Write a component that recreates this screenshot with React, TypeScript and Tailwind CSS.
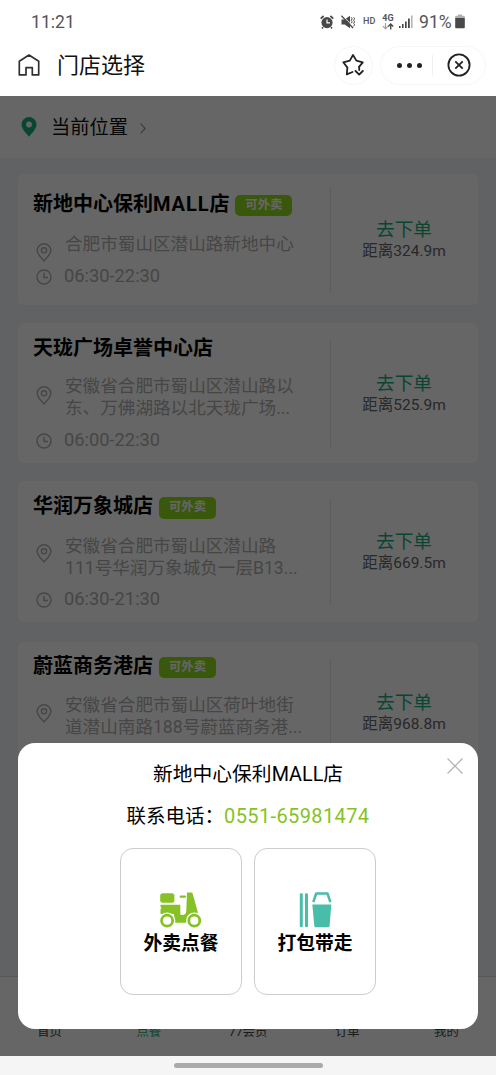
import React from "react";

type Store = {
  name: string;
  nameLatin?: string;
  nameEnd?: string;
  delivery: boolean;
  address: string[];
  hours: string;
  distance: string;
  cardClass: string;
  topClass: string;
  badgeClass: string;
  addressClass: string;
  pinClass: string;
  hoursClass: string;
};

const stores: Store[] = [
  {
    name: "新地中心保利",
    nameLatin: "MALL",
    nameEnd: "店",
    delivery: true,
    address: ["合肥市蜀山区潜山路新地中心"],
    hours: "06:30-22:30",
    distance: "距离324.9m",
    cardClass: "h-[131px]",
    topClass: "pt-[15px]",
    badgeClass: "h-[21px] mt-[3px]",
    addressClass: "mt-[14px] h-[22px]",
    pinClass: "mt-[10px]",
    hoursClass: "mt-[10px]",
  },
  {
    name: "天珑广场卓誉中心店",
    delivery: false,
    address: ["安徽省合肥市蜀山区潜山路以", "东、万佛湖路以北天珑广场..."],
    hours: "06:00-22:30",
    distance: "距离525.9m",
    cardClass: "h-[140px]",
    topClass: "pt-[10px]",
    badgeClass: "h-[21px] mt-[3px]",
    addressClass: "mt-[12px] h-[44px]",
    pinClass: "mt-[11px]",
    hoursClass: "mt-[10px]",
  },
  {
    name: "华润万象城店",
    delivery: true,
    address: ["安徽省合肥市蜀山区潜山路", "111号华润万象城负一层B13..."],
    hours: "06:30-21:30",
    distance: "距离669.5m",
    cardClass: "h-[141px]",
    topClass: "pt-[10px]",
    badgeClass: "h-[22px] mt-[4px]",
    addressClass: "mt-[14px] h-[44px]",
    pinClass: "mt-[9px]",
    hoursClass: "mt-[9px]",
  },
  {
    name: "蔚蓝商务港店",
    delivery: true,
    address: ["安徽省合肥市蜀山区荷叶地街", "道潜山南路188号蔚蓝商务港..."],
    hours: "06:30-21:30",
    distance: "距离968.8m",
    cardClass: "mt-[2px] h-[141px]",
    topClass: "pt-[9px]",
    badgeClass: "h-[21px] mt-[3px]",
    addressClass: "mt-[13px] h-[44px]",
    pinClass: "mt-[10px]",
    hoursClass: "mt-[9px]",
  },
];

const tabs = ["首页", "点餐", "77会员", "订单", "我的"];

function AlarmIcon() {
  return (
    <svg viewBox="0 0 14 14" className="h-[14px] w-[14px]" fill="none">
      <circle cx="7" cy="7.6" r="5.6" fill="#484848" />
      <path d="M.7 3.6 3.6 1M13.3 3.6 10.4 1M3 12.2l-1 1.3M11 12.2l1 1.3" stroke="#484848" strokeWidth="1.7" />
      <path d="M7 4.4v3.5h3" stroke="#fff" strokeWidth="1.2" />
    </svg>
  );
}

function MuteIcon() {
  return (
    <svg viewBox="0 0 14 14" className="h-[14px] w-[14px]" fill="none">
      <path d="M.5 4.6h3.2L9 .8v12.4L3.7 9.6H.5z" fill="#484848" />
      <path d="M1.200.2 12.600 12.200" stroke="#fff" strokeWidth="1" />
      <path d="M.4.8 12 13" stroke="#484848" strokeWidth="1.300" />
      <path d="m10.200 2.300 1 1.500-1 1.500 1 1.500-1 1.500M12.600 2.300l1 1.500-1 1.500 1 1.500-1 1.500 1 1.500-1 1.500" stroke="#484848" strokeWidth="1" />
    </svg>
  );
}

function DataIcon() {
  return (
    <svg viewBox="0 0 12 7" className="h-[7px] w-[12px]" fill="none">
      <path d="M3.5 0v5.5M1 3.2l2.5 2.6L6 3.2" stroke="#a0a0a0" strokeWidth="1.2" />
      <path d="M8.7 6.6V1M6.2 3.6 8.7 1l2.5 2.6" stroke="#484848" strokeWidth="1.4" />
    </svg>
  );
}

function SignalIcon() {
  return (
    <svg viewBox="0 0 14 14" className="h-[14px] w-[14px]">
      <path d="M0 11h1.6v2H0zM3 9h1.6v4H3zM6 6.5h1.7V13H6zM9 3.5h1.8V13H9z" fill="#484848" />
      <path d="M12 .5h1.6V13H12z" fill="#b5b5b5" />
    </svg>
  );
}

function BatteryIcon() {
  return (
    <svg viewBox="0 0 10 15" className="h-[15px] w-[10px]">
      <path d="M3 .4h4v1.4h1.8c.6 0 1 .4 1 1V4H.2V2.8c0-.6.4-1 1-1H3z" fill="#b0b0b0" />
      <path d="M.2 4h9.6v9.3c0 .6-.4 1-1 1H1.2c-.6 0-1-.4-1-1z" fill="#484848" />
    </svg>
  );
}

function HomeIcon() {
  return (
    <svg viewBox="0 0 22 24" className="h-[24px] w-[22px]" fill="none" stroke="#303030" strokeWidth="1.7">
      <path d="M1.3 8.2 11 2l9.7 6.200V21.900h-6.400v-7.200H8v7.200H1.300z" strokeLinejoin="round" />
    </svg>
  );
}

function StarIcon() {
  return (
    <svg viewBox="0 0 22 24" className="h-[24px] w-[22px]" fill="none" stroke="#222" strokeWidth="1.8">
      <path d="m10.500 19-5.700 2.300.6-6.700L1.300 9.300l6.500-1.700L11 2l3.400 5.600 6.400 1.700-3.600 4.300" strokeLinejoin="round" strokeLinecap="round" />
      <path d="m13.500 18 3.700 3.600 3.600-3.600M17.200 13.600v3.400" strokeLinecap="round" strokeLinejoin="round" />
    </svg>
  );
}

function CloseCircleIcon() {
  return (
    <svg viewBox="0 0 24 24" className="h-[24px] w-[24px]" fill="none" stroke="#222" strokeWidth="1.8">
      <circle cx="12" cy="12" r="10.6" />
      <path d="m8.300 8.300 7.400 7.400M15.700 8.300l-7.400 7.400" />
    </svg>
  );
}

function PinIcon() {
  return (
    <svg viewBox="0 0 16 19" className="h-[19px] w-[16px]" fill="none" stroke="#b0b0b0" strokeWidth="1.4">
      <path d="M8 18C5 14.600 1.200 11 1.200 7.400a6.800 6.600 0 0 1 13.600 0C14.800 11 11 14.600 8 18z" />
      <circle cx="8" cy="7.3" r="2.6" />
    </svg>
  );
}

function ClockIcon() {
  return (
    <svg viewBox="0 0 16 16" className="h-[16px] w-[16px]" fill="none" stroke="#b0b0b0" strokeWidth="1.4">
      <circle cx="8" cy="8" r="7" />
      <path d="M8 3.700v4.800h4" />
    </svg>
  );
}

function ScooterIcon() {
  return (
    <svg viewBox="0 0 42 36" className="h-[36px] w-[42px]" fill="#86c225">
      <rect x=".2" y="1.3" width="14.2" height="9.5" rx="2.5" />
      <rect x="19.600" y="3.400" width="6.400" height="2.300" rx="1" />
      <path d="M.5 12.800h19.800v8.700c0 1 .6 1.600 1.700 1.600 2.700 0 4.300-1.700 4.300-4.600L27 .6h4.200c.9 0 1.300.5 1.600 1.400l5 18.300V24H27v6.700H14V22H.5v-5.200l1.300-.6L.5 15z" />
      <circle cx="7.100" cy="28.700" r="8.300" fill="#fff" />
      <circle cx="34.300" cy="28.700" r="8.300" fill="#fff" />
      <circle cx="7.100" cy="28.700" r="5.500" fill="#fff" stroke="#86c225" strokeWidth="2.800" />
      <circle cx="34.300" cy="28.700" r="5.500" fill="#fff" stroke="#86c225" strokeWidth="2.800" />
    </svg>
  );
}

function TakeawayIcon() {
  return (
    <svg viewBox="0 0 33 36" className="h-[36px] w-[33px]" fill="#48bdaa">
      <rect x=".8" y="1.3" width="3" height="34" rx="1.3" />
      <rect x="6" y="1.3" width="3" height="34" rx="1.3" />
      <path d="M13.300 12.500h19l-1.700 21.200c-.1 1-.7 1.600-1.700 1.600H17c-1 0-1.600-.6-1.700-1.600z" />
      <path d="m14.300 10.200 2.900-8.700h11.300l2.900 8.700" fill="none" stroke="#48bdaa" strokeWidth="2.500" strokeLinejoin="round" />
    </svg>
  );
}

function Header() {
  return (
    <header className="h-[96px] bg-white">
      <div className="flex h-[44px] items-center pr-[31px] pl-[31px] text-[#555]">
        <span className="text-[17.6px]">11:21</span>
        <div className="ml-auto flex items-center">
          <AlarmIcon />
          <span className="ml-[7px] flex"><MuteIcon /></span>
          <span className="ml-[8px] w-[12px] text-[9px] leading-none font-medium">HD</span>
          <div className="ml-[7px] flex w-[12px] flex-col items-center text-[9px] leading-[9px] font-bold">
            4G
            <DataIcon />
          </div>
          <span className="ml-[5px] flex"><SignalIcon /></span>
          <span className="ml-[6px] w-[33px] text-[17.6px] whitespace-nowrap">91%</span>
          <span className="ml-[3px] flex"><BatteryIcon /></span>
        </div>
      </div>
      <div className="flex h-[42px] items-center pr-[10px] pl-[18px]">
        <HomeIcon />
        <h1 className="mt-[1px] ml-[17px] text-[22px] leading-[42px] text-[#111]">门店选择</h1>
        <div className="ml-auto flex h-[39px] w-[39px] items-center justify-center rounded-full border border-[#f6f6f6] pr-[2px]">
          <StarIcon />
        </div>
        <div className="ml-[7px] flex h-[39px] w-[106px] items-center rounded-full border border-[#f6f6f6]">
          <div className="ml-[16px] flex gap-[5px]">
            <i className="h-[5px] w-[5px] rounded-full bg-[#222]" />
            <i className="h-[5px] w-[5px] rounded-full bg-[#222]" />
            <i className="h-[5px] w-[5px] rounded-full bg-[#222]" />
          </div>
          <div className="ml-[10px] h-[21px] w-px bg-[#f0f0f0]" />
          <div className="ml-[14px]"><CloseCircleIcon /></div>
        </div>
      </div>
    </header>
  );
}

function StoreCard({ store }: { store: Store }) {
  return (
    <article className={`flex shrink-0 rounded-md bg-white pl-[16px] ${store.cardClass}`}>
      <div className={`w-[296px] shrink-0 ${store.topClass}`}>
        <div className="-ml-[1px] flex h-[30px] items-center">
          <h2 className="text-[20px] font-bold whitespace-nowrap text-black">
            {store.name}
            {store.nameLatin && <span className="tracking-[0.9px]">{store.nameLatin}</span>}
            {store.nameEnd}
          </h2>
          {store.delivery && (
            <span className={`ml-[6px] w-[57px] rounded-[5px] bg-[#91dc1e] text-center text-[12.4px] leading-[20px] font-bold text-white ${store.badgeClass}`}>
              可外卖
            </span>
          )}
        </div>
        <div className={`flex ${store.addressClass}`}>
          <div className={`ml-[2px] ${store.pinClass}`}><PinIcon /></div>
          <div className="ml-[13px] text-[17.6px] leading-[22px] whitespace-nowrap text-[#b0b0b0]">
            {store.address.map((line) => (
              <div key={line}>{line}</div>
            ))}
          </div>
        </div>
        <div className={`flex h-[22px] items-center ${store.hoursClass}`}>
          <span className="mt-[1px] ml-[2px]"><ClockIcon /></span>
          <span className="ml-[12px] text-[18.3px] text-[#b0b0b0]">{store.hours}</span>
        </div>
      </div>
      <StoreAction distance={store.distance} />
    </article>
  );
}

function StoreAction({ distance }: { distance: string }) {
  return (
    <div className="flex flex-1 items-center">
      <div className="h-[107px] w-px bg-[#e6e6e6]" />
      <div className="flex-1 pt-[3px] pr-[1px] text-center">
        <div className="text-[18.7px] leading-[21px] text-[#18ae7c]">去下单</div>
        <div className="text-[15.5px] leading-[21px] text-[#666]">{distance}</div>
      </div>
    </div>
  );
}

function OptionCard({ label, icon }: { label: string; icon: React.ReactNode }) {
  return (
    <button className="flex h-[147px] w-[122px] flex-col items-center rounded-[13px] border border-[#ccc] pt-[43px]">
      {icon}
      <span className="mt-[3px] text-[18.8px] leading-[26px] font-bold text-black">{label}</span>
    </button>
  );
}

function PickupDialog() {
  return (
    <section className="absolute top-[647px] left-[18px] h-[286px] w-[460px] rounded-[17px] bg-white">
      <svg viewBox="0 0 16 16" className="absolute top-[15px] right-[15px] h-[16px] w-[16px]" stroke="#b5b5b5" strokeWidth="1.3">
        <path d="m.5.5 15 15M15.500.5l-15 15" />
      </svg>
      <h3 className="pt-[17px] text-center text-[19.8px] leading-[30px] text-black">新地中心保利MALL店</h3>
      <p className="mt-[12px] flex justify-center text-[19.5px] leading-[30px] text-black">
        联系电话：
        <span className="-mt-[1px] text-[20px] tracking-[0.38px] text-[#86c225]">0551-65981474</span>
      </p>
      <div className="mt-[16px] flex justify-center gap-[12px]">
        <OptionCard label="外卖点餐" icon={<ScooterIcon />} />
        <OptionCard label="打包带走" icon={<TakeawayIcon />} />
      </div>
    </section>
  );
}

export default function App() {
  return (
    <div className="flex h-[1075px] w-[496px] flex-col overflow-hidden bg-white font-['Roboto','Noto_Sans_CJK_SC',sans-serif]">
      <Header />
      <main className="relative flex h-[960px] flex-col overflow-hidden bg-[#f3f6fb]">
        <div className="flex h-[62px] shrink-0 items-center bg-white pl-[21px]">
          <svg viewBox="0 0 16 20" className="h-[20px] w-[16px]" fill="#18ae7c">
            <path fillRule="evenodd" d="M8 0a7.500 7.500 0 0 1 7.500 7.500C15.500 12 11 16 8 19.700 5 16 .5 12 .5 7.500A7.500 7.500 0 0 1 8 0zm0 4.600a2.900 2.900 0 1 0 0 5.800 2.900 2.900 0 0 0 0-5.800z" />
          </svg>
          <span className="mt-[3px] ml-[14px] text-[19.3px] text-[#111]">当前位置</span>
          <svg viewBox="0 0 6 11" className="mt-[3px] ml-[12px] h-[11px] w-[6px]" fill="none" stroke="#999" strokeWidth="1.3">
            <path d="m.6.6 4.600 4.900-4.600 4.900" />
          </svg>
        </div>
        <div className="flex h-[818px] shrink-0 flex-col gap-[18px] overflow-hidden px-[18px] pt-[16px]">
          {stores.map((store) => (
            <StoreCard key={store.name} store={store} />
          ))}
        </div>
        <nav className="flex h-[80px] shrink-0 items-end border-t border-[#d8d8d8] bg-white pb-[15px]">
          {tabs.map((tab, i) => (
            <span key={tab} className={`flex-1 text-center text-[12.3px] leading-[18px] ${i === 1 ? "text-[#18ae7c]" : "text-[#444]"}`}>
              {tab}
            </span>
          ))}
        </nav>
        <div className="absolute inset-0 bg-black/60" />
        <PickupDialog />
      </main>
      <footer className="flex flex-1 justify-center bg-[#f5f5f5] pt-[7px]">
        <div className="h-[5px] w-[149px] rounded-full bg-[#aaa]" />
      </footer>
    </div>
  );
}
